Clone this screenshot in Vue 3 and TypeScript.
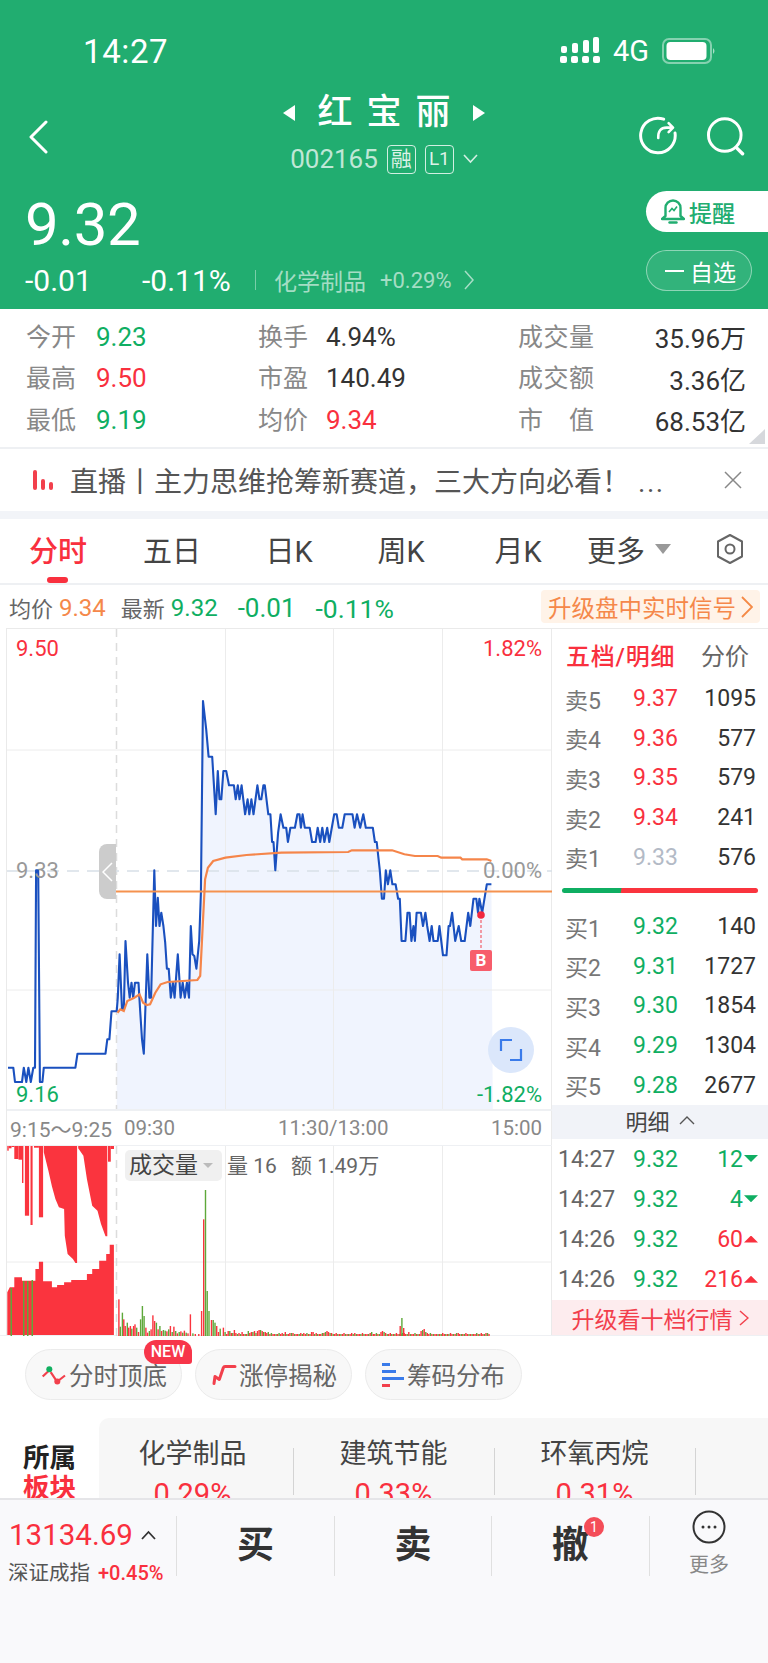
<template>
  <div class="page">
    <header class="head">
      <div class="status">
        <span class="clock">14:27</span>
        <div class="status-right">
          <svg class="signal" width="40" height="28" viewBox="0 0 40 28">
            <g fill="#fff">
              <rect x="0" y="19" width="7" height="7" rx="2" />
              <rect x="11" y="19" width="7" height="7" rx="2" />
              <rect x="22" y="19" width="7" height="7" rx="2" />
              <rect x="33" y="19" width="7" height="7" rx="2" />
              <rect x="1" y="9" width="6" height="7" rx="2" />
              <rect x="12" y="6" width="6" height="10" rx="2" />
              <rect x="23" y="3" width="6" height="13" rx="2" />
              <rect x="33" y="0" width="6" height="16" rx="2" />
            </g>
          </svg>
          <span class="net">4G</span>
          <svg class="battery" width="54" height="26" viewBox="0 0 54 26">
            <rect x="1" y="1" width="48" height="24" rx="6" fill="none" stroke="rgba(255,255,255,.45)" stroke-width="2" />
            <rect x="4.5" y="4" width="40" height="18" rx="4" fill="#fff" />
            <path d="M51 10 q3 3 0 6z" fill="rgba(255,255,255,.6)" />
          </svg>
        </div>
      </div>

      <div class="nav">
        <svg class="back" width="20" height="34" viewBox="0 0 20 34">
          <path d="M18 2 L3 17 L18 32" fill="none" stroke="#fff" stroke-width="3" stroke-linecap="round" stroke-linejoin="round" />
        </svg>
        <div class="nav-mid">
          <div class="title">
            <i class="tri tri-l"></i>
            <span>红</span><span>宝</span><span>丽</span>
            <i class="tri tri-r"></i>
          </div>
          <div class="code">
            <span>002165</span>
            <b class="tag">融</b>
            <b class="tag tag-l">L1</b>
            <svg width="15" height="10" viewBox="0 0 15 10">
              <path d="M1 1 L7.5 8 L14 1" fill="none" stroke="rgba(255,255,255,.8)" stroke-width="1.6" />
            </svg>
          </div>
        </div>
        <div class="nav-icons">
          <svg width="40" height="40" viewBox="0 0 40 40">
            <path d="M26 3 A17.5 17.5 0 1 0 37.5 17" fill="none" stroke="#fff" stroke-width="3" stroke-linecap="round" />
            <path d="M20.5 22 Q20 11.5 29 11.5 H35 M31 7 L35.5 11.5 L31 16" fill="none" stroke="#fff" stroke-width="2.6" stroke-linecap="round" stroke-linejoin="round" />
          </svg>
          <svg width="40" height="40" viewBox="0 0 40 40">
            <circle cx="19" cy="19" r="16.5" fill="none" stroke="#fff" stroke-width="3" />
            <path d="M31 32 L37 38" stroke="#fff" stroke-width="3.5" stroke-linecap="round" />
          </svg>
        </div>
      </div>

      <div class="price-wrap">
        <div class="price-left">
          <div class="price">9.32</div>
          <div class="change">
            <span class="c1">-0.01</span>
            <span class="c2">-0.11%</span>
            <i class="c-sep"></i>
            <span class="c3">化学制品</span>
            <span class="c4">+0.29%</span>
            <svg width="10" height="20" viewBox="0 0 10 20">
              <path d="M1 1 L9 10 L1 19" fill="none" stroke="rgba(255,255,255,.6)" stroke-width="1.5" />
            </svg>
          </div>
        </div>
        <div class="price-right">
          <div class="remind">
            <svg width="24" height="27" viewBox="0 0 24 27">
              <path d="M4.5 18 V10 A7.5 7.5 0 0 1 19.5 10 V18 L23 21 H1 Z" fill="none" stroke="#21ad70" stroke-width="2.4" stroke-linejoin="round" />
              <path d="M8.5 24.5 H15.5" stroke="#21ad70" stroke-width="2.4" stroke-linecap="round" />
              <path d="M8 14 L11 10.5 L13 12.5 L16 8.5" fill="none" stroke="#21ad70" stroke-width="1.6" />
            </svg>
            <span>提醒</span>
          </div>
          <div class="watch"><i></i><span>自选</span></div>
        </div>
      </div>
    </header>

    <section class="quote">
      <div class="q-col q1">
        <div v-for="r in quoteA" :key="r[0]" class="q-row">
          <span class="q-l">{{ r[0] }}</span><span :class="r[2]">{{ r[1] }}</span>
        </div>
      </div>
      <div class="q-col q2">
        <div v-for="r in quoteB" :key="r[0]" class="q-row">
          <span class="q-l">{{ r[0] }}</span><span :class="r[2]">{{ r[1] }}</span>
        </div>
      </div>
      <div class="q-col q3">
        <div v-for="r in quoteC" :key="r[0]" class="q-row">
          <span class="q-l q-l3">{{ r[0] }}</span><span class="dark">{{ r[1] }}</span>
        </div>
      </div>
      <i class="corner"></i>
    </section>

    <section class="notice">
      <svg width="22" height="20" viewBox="0 0 22 20">
        <g fill="#f2404c">
          <rect x="0" y="0" width="4" height="20" rx="2" />
          <rect x="8" y="9" width="4" height="11" rx="2" />
          <rect x="16" y="12" width="4" height="8" rx="2" />
        </g>
      </svg>
      <span class="notice-text">直播丨主力思维抢筹新赛道，三大方向必看！<span class="dots">...</span></span>
      <svg width="20" height="20" viewBox="0 0 20 20">
        <path d="M2 2 L18 18 M18 2 L2 18" stroke="#888" stroke-width="1.5" />
      </svg>
    </section>

    <nav class="tabs">
      <span v-for="(t, i) in tabs" :key="t" class="tab" :class="{ on: i === 0 }">{{ t }}</span>
      <span class="tab-more">更多<i></i></span>
      <svg class="hex" width="30" height="32" viewBox="0 0 30 32">
        <path d="M15 2 L27 8.5 V23.5 L15 30 L3 23.5 V8.5 Z" fill="none" stroke="#666" stroke-width="2" stroke-linejoin="round" />
        <circle cx="15" cy="16" r="4.5" fill="none" stroke="#666" stroke-width="2" />
      </svg>
    </nav>

    <div class="info">
      <span class="i-l">均价</span><span class="i-v orange">9.34</span>
      <span class="i-l i-new">最新</span><span class="i-v up-g">9.32</span>
      <span class="i-v up-g i-c1">-0.01</span>
      <span class="i-v up-g i-c2">-0.11%</span>
      <span class="upgrade">升级盘中实时信号<svg width="12" height="22" viewBox="0 0 12 22"><path d="M1 1 L11 11 L1 21" fill="none" stroke="#f58a46" stroke-width="1.8" /></svg></span>
    </div>

    <section class="market">
      <div class="charts">
        <div class="main-chart">
          <svg width="545" height="482" viewBox="0 0 545 482">
            <path :d="fillPath" fill="#f0f4fe" />
            <g stroke="#ececec" stroke-width="1">
              <path d="M0 121 H545 M0 361 H545 M218.5 0 V482 M326.5 0 V482 M435.5 0 V482" fill="none" />
            </g>
            <path d="M109.5 0 V482" stroke="#dcdcdc" stroke-width="1.5" stroke-dasharray="8 6" />
            <path d="M0 242 H545" stroke="#d8e0e8" stroke-width="1.5" stroke-dasharray="12 8" />
            <path :d="bluePath" fill="none" stroke="#1a50bf" stroke-width="2.1" stroke-linejoin="round" />
            <path d="M109 262.5 H545" stroke="#f5924f" stroke-width="2.2" />
            <path :d="orangePath" fill="none" stroke="#f5854a" stroke-width="2.2" />
            <path d="M474 286 V320" stroke="#f2404c" stroke-width="1" stroke-dasharray="3 2" />
            <circle cx="474" cy="286" r="3.8" fill="#f2273e" />
          </svg>
          <span class="lb tl red">9.50</span>
          <span class="lb tr red">1.82%</span>
          <span class="lb ml gray">9.33</span>
          <span class="lb mr gray">0.00%</span>
          <span class="lb bl up-g">9.16</span>
          <span class="lb br up-g">-1.82%</span>
          <div class="handle">
            <svg width="11" height="20" viewBox="0 0 11 20"><path d="M10 1 L1 10 L10 19" fill="none" stroke="#fff" stroke-width="1.5" /></svg>
          </div>
          <span class="b-mark">B</span>
          <div class="expand">
            <svg width="24" height="24" viewBox="0 0 24 24">
              <path d="M13 2 H2 V13 M22 11 V22 H11" fill="none" stroke="#3a7bea" stroke-width="2.2" />
            </svg>
          </div>
        </div>
        <div class="axis">
          <span class="ax-pre">9:15～9:25</span>
          <span class="ax-a">09:30</span>
          <span class="ax-b">11:30/13:00</span>
          <span class="ax-c">15:00</span>
        </div>
        <div class="vol-chart">
          <svg width="545" height="190" viewBox="0 0 545 190">
            <path d="M0 116 H545 M218.5 0 V190 M326.5 0 V190 M435.5 0 V190" stroke="#ececec" stroke-width="1" fill="none" />
            <path d="M109.5 0 V190" stroke="#dcdcdc" stroke-width="1.5" stroke-dasharray="8 6" />
            <g fill="#fa343e">
              <rect v-for="(r, i) in preTop" :key="'t' + i" :x="r.x" y="0" :width="r.w" :height="r.h" />
              <path v-for="(d, i) in wedges" :key="'w' + i" :d="d" />
              <path :d="preBottom" />
            </g>
            <g fill="#62a53a">
              <rect v-for="g in preGreen" :key="'g' + g.x" :x="g.x" :y="190 - g.h" width="1.5" :height="g.h" />
            </g>
            <rect v-for="(b, i) in bars" :key="'b' + i" :x="b.x" :y="190 - b.h" width="1.4" :height="b.h" :fill="b.c" />
          </svg>
          <div class="vol-tag">成交量<i></i></div>
          <span class="vol-a">量 16</span>
          <span class="vol-b">额 1.49万</span>
        </div>
      </div>

      <aside class="depth">
        <div class="d-head"><b>五档/明细</b><span>分价</span></div>
        <div v-for="r in sells" :key="r[0]" class="d-row">
          <span class="d-l">{{ r[0] }}</span>
          <span class="d-p" :class="r[0] === '卖1' ? 'pale' : 'red'">{{ r[1] }}</span>
          <span class="d-v">{{ r[2] }}</span>
        </div>
        <div class="d-bar"><i></i></div>
        <div v-for="r in buys" :key="r[0]" class="d-row">
          <span class="d-l">{{ r[0] }}</span>
          <span class="d-p up-g">{{ r[1] }}</span>
          <span class="d-v">{{ r[2] }}</span>
        </div>
        <div class="d-band">
          明细
          <svg width="16" height="10" viewBox="0 0 16 10"><path d="M1 9 L8 2 L15 9" fill="none" stroke="#555" stroke-width="1.4" /></svg>
        </div>
        <div v-for="(r, i) in ticks" :key="i" class="t-row">
          <span class="t-t">{{ r.t }}</span>
          <span class="d-p up-g">9.32</span>
          <span class="t-v" :class="r.up ? 'red' : 'up-g'">{{ r.v }}</span>
          <i class="t-a" :class="r.up ? 'a-up' : 'a-down'"></i>
        </div>
        <div class="d-up">升级看十档行情<svg width="10" height="16" viewBox="0 0 10 16"><path d="M1 1 L9 8 L1 15" fill="none" stroke="#f2404c" stroke-width="1.5" /></svg></div>
      </aside>
    </section>

    <div class="pills">
      <div class="pill">
        <svg width="26" height="24" viewBox="0 0 26 24">
          <path d="M1.7 13.5 L7.3 8.2 M9.7 9.2 L15.7 18.2 M17 18 L24 12.5" stroke="#f2404c" stroke-width="2.2" fill="none" />
          <circle cx="8.3" cy="6.2" r="3" fill="#10b060" />
          <circle cx="16.3" cy="18.5" r="3" fill="#f2404c" />
        </svg>
        <span>分时顶底</span>
        <b class="new">NEW</b>
      </div>
      <div class="pill">
        <svg width="26" height="26" viewBox="0 0 26 26">
          <path d="M3 21.5 L4 14.5 L8.3 17.5 L12.3 5.8 Q12.8 4.5 14 4.5 H24" stroke="#f2404c" stroke-width="3" fill="none" stroke-linejoin="round" stroke-linecap="round" />
        </svg>
        <span>涨停揭秘</span>
      </div>
      <div class="pill">
        <svg width="24" height="26" viewBox="0 0 24 26">
          <rect x="1" y="1" width="8" height="3" fill="#3a7bea" />
          <rect x="1" y="8" width="14" height="3" fill="#3a7bea" />
          <rect x="1" y="15" width="22" height="3" fill="#3a7bea" />
          <rect x="1" y="22" width="8" height="3" fill="#f2404c" />
        </svg>
        <span>筹码分布</span>
      </div>
    </div>

    <section class="sector">
      <div class="s-title"><span>所属</span><span class="red">板块</span></div>
      <div class="s-card">
        <div v-for="s in sectors" :key="s[0]" class="s-item">
          <span class="s-name">{{ s[0] }}</span>
          <span class="s-pct red">{{ s[1] }}</span>
        </div>
      </div>
    </section>

    <footer class="bottom">
      <div class="b-index">
        <div class="b-num">
          <span>13134.69</span>
          <svg width="15" height="10" viewBox="0 0 15 10"><path d="M1 9 L7.5 2 L14 9" fill="none" stroke="#333" stroke-width="1.8" /></svg>
        </div>
        <div class="b-sub"><span>深证成指</span><b class="red">+0.45%</b></div>
      </div>
      <div class="b-act">买</div>
      <div class="b-act">卖</div>
      <div class="b-act">撤<i class="badge">1</i></div>
      <div class="b-more">
        <svg width="34" height="34" viewBox="0 0 34 34">
          <circle cx="17" cy="17" r="15.5" fill="none" stroke="#333" stroke-width="2" />
          <g fill="#333"><circle cx="11" cy="17" r="1.5" /><circle cx="17" cy="17" r="1.5" /><circle cx="23" cy="17" r="1.5" /></g>
        </svg>
        <span>更多</span>
      </div>
    </footer>
  </div>
</template>

<script setup lang="ts">
const quoteA = [
  ["今开", "9.23", "up-g"],
  ["最高", "9.50", "red"],
  ["最低", "9.19", "up-g"],
];
const quoteB = [
  ["换手", "4.94%", "dark"],
  ["市盈", "140.49", "dark"],
  ["均价", "9.34", "red"],
];
const quoteC = [
  ["成交量", "35.96万"],
  ["成交额", "3.36亿"],
  ["市 值", "68.53亿"],
];
const tabs = ["分时", "五日", "日K", "周K", "月K"];
const sells = [
  ["卖5", "9.37", "1095"],
  ["卖4", "9.36", "577"],
  ["卖3", "9.35", "579"],
  ["卖2", "9.34", "241"],
  ["卖1", "9.33", "576"],
];
const buys = [
  ["买1", "9.32", "140"],
  ["买2", "9.31", "1727"],
  ["买3", "9.30", "1854"],
  ["买4", "9.29", "1304"],
  ["买5", "9.28", "2677"],
];
const ticks = [
  { t: "14:27", v: "12", up: false },
  { t: "14:27", v: "4", up: false },
  { t: "14:26", v: "60", up: true },
  { t: "14:26", v: "216", up: true },
];
const sectors = [
  ["化学制品", "0.29%"],
  ["建筑节能", "0.33%"],
  ["环氧丙烷", "0.31%"],
  ["新", "0"],
];

// 点位按截图量出来的坐标记录，这里换算成 svg 坐标
const sx = (x: number) => +(x / 2.851 - 6).toFixed(1);
const my = (y: number) => +(y / 3 - 3).toFixed(1);
const vy = (y: number) => +(y / 3 - 37).toFixed(1);

const blue = [
  20,1325, 35,1325, 40,1368, 60,1368, 65,1325, 72,1368, 78,1325, 85,1368, 92,1325, 97,1325, 100,733, 106,733, 111,1368, 118,1368, 122,1325,
  212,1325, 218,1283, 298,1283, 303,1240, 309,1240, 315,1156, 330,1156, 333,1115, 338,985, 345,1150, 350,1150, 355,945, 362,1070, 367,1115,
  372,1070, 377,1115, 382,1070, 392,1070, 397,1156, 402,1240, 407,1283, 417,985, 423,1115, 428,1115, 437,733, 442,900, 447,815, 452,900,
  457,860, 463,900, 468,950, 473,1028, 478,1028, 484,1115, 490,1070, 495,1115, 504,985, 512,1115, 518,1070, 524,1115, 530,1070, 536,1115,
  541,900, 546,985, 551,990, 557,1028, 565,945, 570,800, 576,225, 585,310, 592,392, 602,392, 612,565, 618,435, 623,520, 628,520, 634,435,
  642,435, 650,478, 664,478, 669,520, 675,478, 680,520, 686,478, 696,565, 703,520, 708,565, 714,520, 720,565, 731,478, 737,520, 742,520,
  748,478, 752,478, 762,565, 768,565, 773,648, 777,648, 782,733, 790,620, 797,565, 805,605, 813,605, 818,648, 825,605, 838,605, 845,565,
  851,565, 855,605, 860,565, 866,605, 880,605, 887,648, 897,648, 903,605, 910,648, 916,605, 922,648, 930,605, 936,648, 943,605, 950,565,
  957,565, 963,605, 973,605, 980,565, 1002,565, 1008,605, 1015,565, 1024,605, 1033,565, 1040,605, 1060,605, 1066,648, 1071,648, 1080,733,
  1086,818, 1092,818, 1097,733, 1103,775, 1110,733, 1116,775, 1125,775, 1132,818, 1137,818, 1142,945, 1153,945, 1159,860, 1165,860, 1170,945,
  1176,900, 1180,945, 1185,860, 1197,860, 1203,900, 1210,860, 1215,900, 1222,945, 1228,900, 1233,945, 1245,945, 1250,900, 1260,988, 1270,988,
  1276,900, 1280,900, 1286,860, 1295,945, 1305,900, 1312,945, 1322,945, 1332,860, 1338,900, 1347,818, 1355,818, 1360,860, 1364,818, 1372,860,
  1385,775, 1398,775,
];
const orange = [
  332,1160, 340,1150, 350,1155, 360,1125, 380,1115, 395,1105, 405,1130, 415,1137, 425,1135, 440,1100, 455,1075, 475,1068, 560,1062, 568,1050,
  575,900, 582,760, 590,725, 605,705, 640,695, 700,687, 800,680, 990,678, 1000,673, 1115,673, 1150,685, 1180,690, 1245,690, 1255,695, 1310,695,
  1315,700, 1385,700, 1398,705,
];

const toPath = (pts: number[]) => {
  let d = "";
  for (let i = 0; i < pts.length; i += 2) {
    d += (i ? "L" : "M") + sx(pts[i]) + " " + my(pts[i + 1]);
  }
  return d;
};
const bluePath = toPath(blue);
const orangePath = toPath(orange);

// 9:30 之后的面积
const openIdx = blue.indexOf(330);
const fillPath =
  toPath(blue.slice(openIdx)) + "L" + sx(1402) + " " + my(1453) + "L" + sx(330) + " " + my(1453) + "Z";

const rect = (x0: number, x1: number, y: number) => ({
  x: sx(x0),
  w: +((x1 - x0) / 2.851).toFixed(1),
  h: vy(y),
});
const preTop = [
  rect(18, 22, 125), rect(22, 30, 118), rect(30, 38, 114), rect(38, 50, 150), rect(50, 60, 152), rect(60, 64, 222),
  rect(68, 80, 320), rect(84, 90, 348), rect(94, 108, 116), rect(108, 120, 325), rect(305, 313, 158), rect(313, 322, 120),
];
const poly = (pts: number[]) => {
  let d = "";
  for (let i = 0; i < pts.length; i += 2) {
    d += (i ? "L" : "M") + sx(pts[i]) + " " + vy(pts[i + 1]);
  }
  return d + "Z";
};
const wedges = [
  poly([122,110, 217,110, 217,462, 212,462, 205,450, 190,435, 182,380, 180,300, 165,295, 155,270, 145,232, 135,185, 122,130]),
  poly([220,110, 303,110, 303,382, 298,382, 285,345, 275,305, 260,290, 245,210, 235,140, 220,118]),
];
const preBottom = poly([
  18,678, 18,550, 25,535, 38,535, 38,505, 60,505, 60,515, 98,515, 98,480, 108,480, 108,458, 120,458, 120,517, 145,517, 145,535, 160,535, 160,528,
  180,528, 180,520, 200,520, 200,513, 245,513, 245,495, 260,495, 260,480, 280,480, 280,455, 300,455, 300,435, 310,435, 310,407, 322,407, 322,678,
]);
const preGreen = [
  { x: 3.5, h: 48 },
  { x: 16, h: 55 },
  { x: 20, h: 55 },
  { x: 24.5, h: 56 },
];

const RED = "#fa343e";
const GREEN = "#5ea83a";
const head: [number, number, string][] = [
  [334,110,RED],[338,28,GREEN],[344,70,GREEN],[348,50,RED],[352,30,RED],[358,40,GREEN],[362,25,RED],[367,30,RED],[371,22,GREEN],[376,30,RED],
  [380,35,RED],[385,25,GREEN],[390,12,RED],[396,50,GREEN],[401,90,GREEN],[406,60,GREEN],[411,25,RED],[416,10,RED],[421,15,GREEN],[426,20,RED],
  [431,62,RED],[436,45,RED],[441,40,GREEN],[446,20,RED],[451,30,GREEN],[456,15,RED],[461,18,GREEN],[466,16,GREEN],[471,14,RED],[476,20,GREEN],
  [481,30,RED],[486,12,GREEN],[491,28,RED],[496,15,GREEN],[501,8,RED],[506,12,GREEN],[511,14,RED],[516,10,GREEN],[521,16,RED],[526,10,GREEN],
  [531,8,RED],[538,65,RED],[545,8,GREEN],[552,6,RED],[562,6,RED],[570,75,RED],[576,350,RED],[581,438,GREEN],[586,135,GREEN],[591,75,GREEN],
  [598,48,RED],[603,48,GREEN],[608,40,GREEN],[613,30,RED],[618,12,RED],[623,22,GREEN],[632,25,RED],
];
// 尾部小量
const tail = "3144225212131114233424554332312111121213112221111212121133121112234322112111121111212111121111231121134321121112111221131112111456321211111112111121112211112111111211211221";
const bars = [
  ...head.map(([x, h, c]) => ({ x: sx(x), h: h / 3, c })),
  ...tail.split("").map((n, i) => ({
    x: sx(637 + i * 4.4),
    h: +n + 1,
    c: (i * 7) % 5 < 2 ? GREEN : RED,
  })),
  { x: sx(1136), h: 10, c: RED },
  { x: sx(1141), h: 18, c: GREEN },
  { x: sx(1146), h: 8, c: RED },
];
</script>

<style>
html,
body {
  margin: 0;
  background: #fff;
}
</style>

<style scoped>
.page {
  position: relative;
  width: 768px;
  height: 1663px;
  overflow: hidden;
  background: #fff;
  color: #333;
  font-family: Roboto, "Noto Sans CJK SC", sans-serif;
  display: flex;
  flex-direction: column;
}
i {
  font-style: normal;
}
.red {
  color: #f9303e;
}
.up-g {
  color: #0fae62;
}
.dark {
  color: #333;
}
.gray {
  color: #999;
}
.orange {
  color: #f5884a;
}
.pale {
  color: #b3bac6;
}

/* 顶部 */
.head {
  height: 309px;
  flex: none;
  background: #21ad70;
  color: #fff;
  display: flex;
  flex-direction: column;
}
.status {
  height: 88px;
  flex: none;
  display: flex;
  align-items: flex-start;
  justify-content: space-between;
  padding: 0 52px 0 83px;
}
.clock {
  font-size: 33px;
  line-height: 36px;
  margin-top: 34px;
  letter-spacing: 0.6px;
}
.status-right {
  display: flex;
  align-items: center;
  margin-top: 37px;
  height: 28px;
}
.signal {
  margin-right: 13px;
}
.net {
  font-size: 29px;
  line-height: 28px;
  width: 49px;
}
.nav {
  height: 88px;
  flex: none;
  display: grid;
  grid-template-columns: 130px 1fr 130px;
  position: relative;
}
.back {
  margin: 32px 0 0 28px;
}
.nav-mid {
  display: flex;
  flex-direction: column;
  align-items: center;
}
.title {
  display: flex;
  align-items: center;
  gap: 14px;
  font-size: 35px;
  line-height: 48px;
  font-weight: 500;
  margin-top: 1px;
}
.tri {
  width: 0;
  height: 0;
  border-top: 8px solid transparent;
  border-bottom: 8px solid transparent;
}
.tri-l {
  border-right: 12px solid #fff;
  margin-right: 8px;
}
.tri-r {
  border-left: 12px solid #fff;
  margin-left: 8px;
}
.code {
  display: flex;
  align-items: center;
  gap: 9px;
  font-size: 26px;
  line-height: 32px;
  color: rgba(255, 255, 255, 0.72);
  margin-top: 6px;
}
.tag {
  width: 29px;
  height: 29px;
  box-sizing: border-box;
  border: 1px solid rgba(255, 255, 255, 0.8);
  border-radius: 4px;
  font-size: 21px;
  line-height: 26px;
  font-weight: 400;
  text-align: center;
  color: rgba(255, 255, 255, 0.85);
}
.tag-l {
  font-size: 19px;
}
.nav-icons {
  display: flex;
  justify-content: flex-end;
  gap: 28px;
  padding: 28px 23px 0 0;
}
.price-wrap {
  flex: 1;
  display: flex;
  justify-content: space-between;
}
.price-left {
  padding-left: 25px;
}
.price {
  font-size: 60px;
  line-height: 70px;
  margin-top: 14px;
  letter-spacing: -0.4px;
}
.change {
  display: flex;
  align-items: center;
  height: 34px;
  margin-top: 3px;
  font-size: 30px;
}
.c1 {
  width: 117px;
}
.c2 {
  width: 113px;
}
.c-sep {
  width: 1px;
  height: 20px;
  background: rgba(255, 255, 255, 0.4);
  margin-right: 18px;
}
.c3 {
  font-size: 23px;
  color: rgba(255, 255, 255, 0.6);
  width: 106px;
}
.c4 {
  font-size: 22px;
  color: rgba(255, 255, 255, 0.6);
  width: 84px;
}
.price-right {
  display: flex;
  flex-direction: column;
  align-items: flex-end;
  padding-top: 15px;
  gap: 18px;
}
.remind {
  width: 122px;
  height: 41px;
  box-sizing: border-box;
  padding-left: 15px;
  background: #fff;
  border-radius: 21px 0 0 21px;
  display: flex;
  align-items: center;
  gap: 4px;
  color: #21ad70;
  font-size: 23px;
  font-weight: 500;
}
.watch {
  width: 106px;
  height: 41px;
  box-sizing: border-box;
  margin-right: 16px;
  padding-left: 18px;
  border: 1px solid rgba(255, 255, 255, 0.45);
  background: rgba(255, 255, 255, 0.08);
  border-radius: 21px;
  display: flex;
  align-items: center;
  gap: 6px;
  font-size: 23px;
}
.watch i {
  width: 19px;
  height: 2px;
  background: #fff;
}

/* 报价 */
.quote {
  height: 140px;
  flex: none;
  position: relative;
  display: flex;
  padding-top: 7px;
  box-sizing: border-box;
  border-bottom: 2px solid #eef0f3;
}
.q-col {
  display: flex;
  flex-direction: column;
}
.q-row {
  height: 41.5px;
  display: flex;
  align-items: center;
  font-size: 26px;
}
.q-l {
  width: 70px;
  font-size: 25px;
  color: #888;
  margin-bottom: 4px;
}
.q1 {
  width: 256px;
  padding-left: 26px;
  box-sizing: border-box;
}
.q2 {
  width: 262px;
  padding-left: 2px;
  box-sizing: border-box;
}
.q2 .q-l {
  width: 68px;
}
.q3 {
  width: 228px;
}
.q3 .q-row {
  justify-content: space-between;
}
.q-l3 {
  width: 76px;
  white-space: pre;
  text-align-last: justify;
}
.corner {
  position: absolute;
  right: 3px;
  bottom: 3px;
  width: 0;
  height: 0;
  border-left: 16px solid transparent;
  border-bottom: 15px solid #d6d8dc;
}

.notice {
  height: 61px;
  flex: none;
  display: flex;
  align-items: center;
  padding-left: 33px;
  padding-bottom: 1px;
  margin-bottom: -1px;
  border-bottom: 8px solid #f2f4f8;
}
.notice-text {
  width: 653px;
  margin-left: 15px;
  font-size: 28px;
  color: #555;
  white-space: nowrap;
}
.dots {
  margin-left: 8px;
  letter-spacing: 1.5px;
}

/* tab */
.tabs {
  height: 67px;
  flex: none;
  box-sizing: border-box;
  border-bottom: 2px solid #eef0f3;
  padding-bottom: 4px;
  display: grid;
  grid-template-columns: 116px 112px 122px 102px 132px 114px 1fr;
  align-items: center;
  position: relative;
}
.tab {
  text-align: center;
  font-size: 29px;
  color: #444;
}
.tab.on {
  color: #f9303e;
  font-weight: 500;
}
.tab.on::after {
  content: "";
  position: absolute;
  left: 47px;
  bottom: 0;
  width: 21px;
  height: 6px;
  background: #f9303e;
  border-radius: 3px;
}
.tab-more {
  display: flex;
  align-items: center;
  font-size: 29px;
  color: #444;
  padding-left: 3px;
}
.tab-more i {
  margin-left: 10px;
  width: 0;
  height: 0;
  border-left: 8px solid transparent;
  border-right: 8px solid transparent;
  border-top: 10px solid #999;
}
.hex {
  justify-self: start;
  margin-left: 17px;
}

.info {
  height: 43px;
  flex: none;
  display: flex;
  align-items: center;
  padding-left: 9px;
  font-size: 22px;
  color: #666;
}
.i-v {
  font-size: 24px;
  margin-left: 6px;
  margin-top: 3px;
}
.i-new {
  margin-left: 15px;
}
.i-c1 {
  margin-left: 20px;
  font-size: 26px;
}
.i-c2 {
  margin-left: 20px;
  font-size: 26.5px;
}
.upgrade {
  margin-left: auto;
  margin-right: 8px;
  height: 33px;
  padding: 0 7px;
  background: #fff3e8;
  border-radius: 4px;
  display: flex;
  align-items: center;
  gap: 5px;
  font-size: 23.5px;
  color: #f5884a;
}

/* 图表 */
.market {
  flex: none;
  display: flex;
  height: 708px;
  box-sizing: border-box;
  border-bottom: 1px solid #eef0f3;
}
.charts {
  width: 545px;
  margin-left: 6px;
  flex: none;
  border-left: 1px solid #eaeaea;
  border-top: 1px solid #eaeaea;
  margin-right: -1px;
}
.main-chart {
  position: relative;
  height: 480px;
  overflow: hidden;
}
.main-chart svg {
  display: block;
}
.lb {
  position: absolute;
  font-size: 22px;
  line-height: 24px;
}
.tl {
  left: 9px;
  top: 8px;
}
.tr {
  right: 10px;
  top: 8px;
}
.ml {
  left: 9px;
  top: 230px;
}
.mr {
  right: 10px;
  top: 230px;
}
.bl {
  left: 9px;
  top: 454px;
}
.br {
  right: 10px;
  top: 454px;
}
.handle {
  position: absolute;
  left: 92px;
  top: 215px;
  width: 17px;
  height: 55px;
  background: #ccc;
  border-radius: 8px 0 0 8px;
  display: flex;
  align-items: center;
  justify-content: center;
}
.b-mark {
  position: absolute;
  left: 463px;
  top: 321px;
  width: 22px;
  height: 21px;
  background: #f75d6b;
  border-radius: 2px;
  color: #fff;
  font-size: 17px;
  line-height: 21px;
  font-weight: 700;
  text-align: center;
}
.expand {
  position: absolute;
  left: 481px;
  top: 398px;
  width: 46px;
  height: 46px;
  border-radius: 50%;
  background: #dbe7fb;
  display: flex;
  align-items: center;
  justify-content: center;
}
.axis {
  height: 37px;
  box-sizing: border-box;
  border-top: 2px solid #eef0f3;
  border-bottom: 1px solid #eef0f3;
  position: relative;
  display: flex;
  align-items: center;
  font-size: 20.5px;
  color: #888;
}
.ax-pre {
  width: 116px;
  padding-left: 3px;
  box-sizing: border-box;
  white-space: nowrap;
  font-size: 21px;
}
.ax-a {
  width: 155px;
  padding-left: 1px;
  box-sizing: border-box;
}
.ax-b {
  width: 213px;
}
.vol-chart {
  position: relative;
  height: 190px;
}
.vol-chart svg {
  display: block;
}
.vol-tag {
  position: absolute;
  left: 118px;
  top: 4px;
  height: 31px;
  width: 97px;
  box-sizing: border-box;
  padding-left: 4px;
  background: #f0f0f0;
  border-radius: 5px;
  font-size: 23px;
  line-height: 31px;
  color: #444;
  display: flex;
  align-items: center;
  gap: 5px;
}
.vol-tag i {
  width: 0;
  height: 0;
  border-left: 5px solid transparent;
  border-right: 5px solid transparent;
  border-top: 5px solid #bbb;
}
.vol-a,
.vol-b {
  position: absolute;
  top: 7px;
  font-size: 21px;
  line-height: 26px;
  color: #666;
}
.vol-a {
  left: 220px;
}
.vol-b {
  left: 284px;
}

/* 盘口 */
.depth {
  flex: 1;
  border-left: 1px solid #eaeaea;
  border-top: 1px solid #eaeaea;
  display: flex;
  flex-direction: column;
}
.d-head {
  height: 50px;
  flex: none;
  display: flex;
  justify-content: space-between;
  align-items: center;
  padding: 0 19px 0 14px;
  font-size: 24px;
  color: #666;
}
.d-head b {
  color: #f9303e;
  font-weight: 500;
  font-size: 24px;
  letter-spacing: 0.8px;
}
.d-row {
  height: 39.6px;
  flex: none;
  display: flex;
  align-items: center;
  font-size: 23px;
}
.t-row {
  height: 40.3px;
  flex: none;
  display: flex;
  align-items: center;
  font-size: 23px;
  position: relative;
}
.d-l {
  width: 81px;
  padding-left: 13px;
  box-sizing: border-box;
  color: #777;
}
.d-p {
  width: 50px;
}
.d-v {
  width: 73px;
  text-align: right;
  color: #333;
}
.d-bar {
  height: 17px;
  flex: none;
  margin-top: 5px;
  margin-bottom: 8px;
  padding: 6px 10px;
  box-sizing: border-box;
}
.d-bar i {
  display: block;
  height: 5px;
  border-radius: 3px;
  background: linear-gradient(100deg, #0fae62 0 30%, #fa343e 30.5%);
}
.d-band {
  height: 34px;
  flex: none;
  box-sizing: border-box;
  padding-bottom: 4px;
  background: #f1f3f8;
  display: flex;
  align-items: center;
  justify-content: center;
  gap: 9px;
  font-size: 22px;
  color: #444;
}
.t-t {
  width: 81px;
  padding-left: 6px;
  box-sizing: border-box;
  color: #666;
}
.t-v {
  width: 60px;
  text-align: right;
}
.t-a {
  position: absolute;
  right: 10px;
  top: 16px;
  width: 14px;
  height: 7px;
}
.a-up {
  background: #f9303e;
  clip-path: polygon(50% 0, 100% 100%, 0 100%);
}
.a-down {
  background: #0fae62;
  clip-path: polygon(0 0, 100% 0, 50% 100%);
}
.d-up {
  flex: 1;
  background: #fdecee;
  color: #f2404c;
  font-size: 23px;
  display: flex;
  align-items: center;
  justify-content: center;
  gap: 6px;
}

/* 按钮 */
.pills {
  height: 82px;
  flex: none;
  box-sizing: border-box;
  padding: 13px 0 0 25px;
  display: flex;
  gap: 13px;
}
.pill {
  position: relative;
  width: 157px;
  height: 51px;
  box-sizing: border-box;
  border: 1px solid #ebebeb;
  border-radius: 26px;
  background: #f8f8f8;
  display: flex;
  align-items: center;
  padding-left: 15px;
  gap: 2px;
  font-size: 24.5px;
  color: #666;
  white-space: nowrap;
}
.new {
  position: absolute;
  right: -11px;
  top: -10px;
  width: 48px;
  height: 24px;
  background: #f7364a;
  color: #fff;
  border-radius: 12px 12px 3px 12px;
  font-size: 16px;
  line-height: 24px;
  font-weight: 500;
  text-align: center;
}

/* 板块 */
.sector {
  height: 80px;
  flex: none;
  display: flex;
  overflow: hidden;
}
.s-title {
  width: 99px;
  flex: none;
  box-sizing: border-box;
  padding: 25px 0 0 23px;
  display: flex;
  flex-direction: column;
  font-size: 26.5px;
  line-height: 30px;
  font-weight: 700;
  color: #222;
}
.s-card {
  flex: 1;
  display: flex;
  background: #f7f7f7;
  border-radius: 10px 10px 0 0;
}
.s-item {
  width: 201px;
  flex: none;
  height: 110px;
  box-sizing: border-box;
  padding-top: 16px;
  display: flex;
  flex-direction: column;
  align-items: center;
  position: relative;
}
.s-item:first-child {
  margin-left: -7px;
}
.s-item::after {
  content: "";
  position: absolute;
  right: -1px;
  top: 30px;
  width: 1px;
  height: 47px;
  background: #d4d4d4;
}
.s-name {
  font-size: 27px;
  line-height: 40px;
  color: #444;
  white-space: nowrap;
}
.s-pct {
  font-size: 29px;
  line-height: 40px;
}

/* 底栏 */
.bottom {
  flex: 1;
  box-sizing: border-box;
  background: #f9f9fb;
  border-top: 2px solid #e5e5e8;
  display: grid;
  grid-template-columns: 177px 158px 157px 158px 1fr;
  align-items: start;
  padding-top: 16px;
  position: relative;
}
.b-index {
  height: 60px;
  border-right: 1px solid #e0e0e0;
  padding-left: 9px;
  position: relative;
}
.b-num {
  display: flex;
  align-items: center;
  gap: 8px;
  color: #f9303e;
  font-size: 29.5px;
  line-height: 38px;
  white-space: nowrap;
}
.b-sub {
  display: flex;
  align-items: center;
  gap: 8px;
  font-size: 20.5px;
  line-height: 30px;
  color: #555;
  margin-left: -1px;
  margin-top: 4px;
  white-space: nowrap;
}
.b-sub b {
  font-size: 20px;
  font-weight: 500;
  color: #f9303e;
}
.b-act {
  height: 60px;
  border-right: 1px solid #e0e0e0;
  font-size: 37px;
  font-weight: 700;
  line-height: 60px;
  text-align: center;
  color: #333;
  position: relative;
}
.badge {
  position: absolute;
  left: 92px;
  top: 1px;
  width: 20px;
  height: 20px;
  border-radius: 50%;
  background: #f44d58;
  color: #fff;
  font-size: 14px;
  line-height: 20px;
  font-weight: 400;
  text-align: center;
}
.b-more {
  display: flex;
  flex-direction: column;
  align-items: center;
  margin-top: -6px;
  font-size: 20px;
  color: #888;
  gap: 5px;
}
</style>
